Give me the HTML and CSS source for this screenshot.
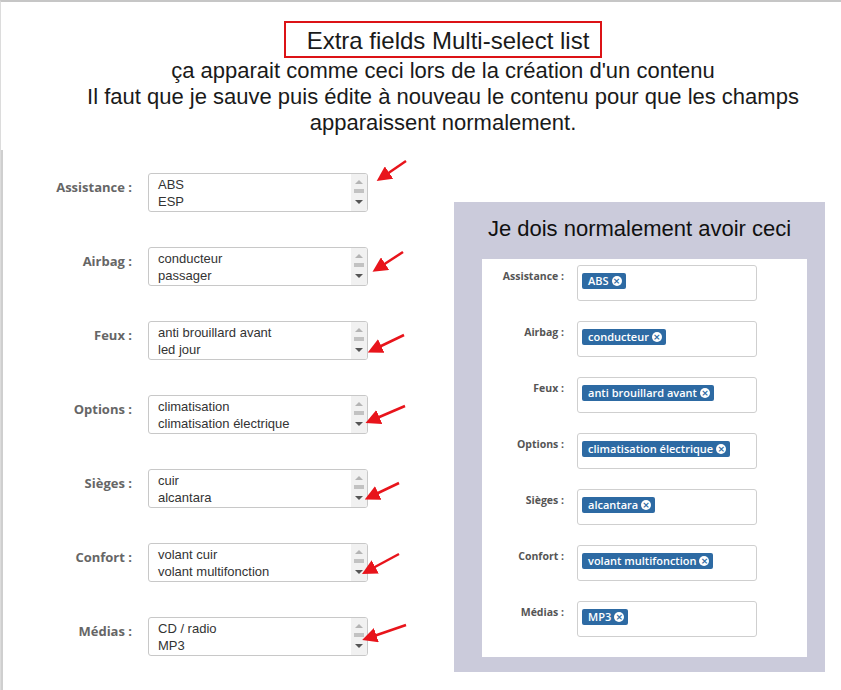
FILE: index.html
```html
<!DOCTYPE html>
<html lang="fr">
<head>
    <meta charset="UTF-8">
    <title>Extra fields Multi-select list</title>
    <link rel="stylesheet" href="styles.css">
</head>
<body>
    <div class="header">
        <div class="title-box">Extra fields Multi-select list</div>
        <p class="note">ça apparait comme ceci lors de la création d'un contenu</p>
        <p class="note">Il faut que je sauve puis édite à nouveau le contenu pour que les champs<br>apparaissent normalement.</p>
    </div>

    <div class="main">
        <div class="form">
            <label class="field-label">Assistance :</label>
            <div class="select"><div class="options"><div>ABS</div><div>ESP</div></div><div class="scroll"><span class="up"></span><span class="thumb"></span><span class="down"></span></div></div>

            <label class="field-label">Airbag :</label>
            <div class="select"><div class="options"><div>conducteur</div><div>passager</div></div><div class="scroll"><span class="up"></span><span class="thumb"></span><span class="down"></span></div></div>

            <label class="field-label">Feux :</label>
            <div class="select"><div class="options"><div>anti brouillard avant</div><div>led jour</div></div><div class="scroll"><span class="up"></span><span class="thumb"></span><span class="down"></span></div></div>

            <label class="field-label">Options :</label>
            <div class="select"><div class="options"><div>climatisation</div><div>climatisation électrique</div></div><div class="scroll"><span class="up"></span><span class="thumb"></span><span class="down"></span></div></div>

            <label class="field-label">Sièges :</label>
            <div class="select"><div class="options"><div>cuir</div><div>alcantara</div></div><div class="scroll"><span class="up"></span><span class="thumb"></span><span class="down"></span></div></div>

            <label class="field-label">Confort :</label>
            <div class="select"><div class="options"><div>volant cuir</div><div>volant multifonction</div></div><div class="scroll"><span class="up"></span><span class="thumb"></span><span class="down"></span></div></div>

            <label class="field-label">Médias :</label>
            <div class="select"><div class="options"><div>CD / radio</div><div>MP3</div></div><div class="scroll"><span class="up"></span><span class="thumb"></span><span class="down"></span></div></div>

            <!-- red annotation arrows -->
            <svg class="arrows" width="454" height="540" viewBox="0 0 454 540">
                <defs>
                    <marker id="head" markerWidth="6" markerHeight="6" refX="1" refY="3" orient="auto" markerUnits="strokeWidth">
                        <path d="M0,0 L6,3 L0,6 z" fill="#e8141b"/>
                    </marker>
                </defs>
                <g stroke="#e8141b" stroke-width="2.5" marker-end="url(#head)">
                    <line x1="405" y1="11" x2="386" y2="24"/>
                    <line x1="402" y1="102" x2="382" y2="115"/>
                    <line x1="403" y1="185" x2="378" y2="197"/>
                    <line x1="404" y1="256" x2="376" y2="268"/>
                    <line x1="398" y1="333" x2="375" y2="344"/>
                    <line x1="398" y1="404" x2="372" y2="418"/>
                    <line x1="405" y1="475" x2="373" y2="486"/>
                </g>
            </svg>
        </div>

        <div class="panel">
            <div class="panel-title">Je dois normalement avoir ceci</div>
            <div class="card">
                <label class="tag-label">Assistance :</label>
                <div class="tag-input"><span class="tag">ABS <span class="remove">&times;</span></span></div>

                <label class="tag-label">Airbag :</label>
                <div class="tag-input"><span class="tag">conducteur <span class="remove">&times;</span></span></div>

                <label class="tag-label">Feux :</label>
                <div class="tag-input"><span class="tag">anti brouillard avant <span class="remove">&times;</span></span></div>

                <label class="tag-label">Options :</label>
                <div class="tag-input"><span class="tag">climatisation électrique <span class="remove">&times;</span></span></div>

                <label class="tag-label">Sièges :</label>
                <div class="tag-input"><span class="tag">alcantara <span class="remove">&times;</span></span></div>

                <label class="tag-label">Confort :</label>
                <div class="tag-input"><span class="tag">volant multifonction <span class="remove">&times;</span></span></div>

                <label class="tag-label">Médias :</label>
                <div class="tag-input"><span class="tag">MP3 <span class="remove">&times;</span></span></div>
            </div>
        </div>
    </div>
</body>
</html>
```

FILE: styles.css
```css
body {
    margin: 0;
    height: 688px;
    overflow: hidden;
    background-color: #fff;
    border-top: 2px solid #c6c6c6;
    border-left: 1px solid #dcdcdc;
    font-family: "Liberation Sans", Arial, sans-serif;
    color: #1a1a1a;
}
.header {
    padding: 19px 0 0 44px;
    text-align: center;
}
.title-box {
    display: inline-block;
    box-sizing: border-box;
    height: 37px;
    padding: 0 11px 0 21px;
    border: 2px solid #dc1316;
    font-size: 24px;
    line-height: 35px;
}
.note {
    margin: 0;
    font-size: 22px;
    line-height: 26px;
}
.main {
    display: flex;
    align-items: flex-start;
    margin-top: 14px;
}
.form {
    position: relative;
    box-sizing: border-box;
    width: 453px;
    height: 540px;
    padding-top: 23px;
    border-left: 2px solid #cfcfcf;
    display: grid;
    grid-template-columns: 129px 220px;
    grid-auto-rows: 39px;
    column-gap: 16px;
    row-gap: 35px;
    align-content: start;
}
.field-label {
    padding-top: 5px;
    text-align: right;
    font-family: "Open Sans", sans-serif;
    font-weight: bold;
    font-size: 13px;
    color: #666;
}
.select {
    display: flex;
    box-sizing: border-box;
    border: 1px solid #c8c8c8;
    border-radius: 3px;
    overflow: hidden;
}
.options {
    flex: 1;
    padding: 3px 0 0 9px;
    font-size: 13px;
    line-height: 16.5px;
    color: #333;
}
.scroll {
    width: 16px;
    background-color: #f1f1f1;
    display: flex;
    flex-direction: column;
    align-items: center;
    padding-top: 6px;
}
.scroll .up {
    width: 0;
    height: 0;
    border-left: 4px solid transparent;
    border-right: 4px solid transparent;
    border-bottom: 4px solid #b4b4b4;
}
.scroll .thumb {
    width: 10px;
    height: 4px;
    margin-top: 5px;
    background-color: #c2c2c2;
}
.scroll .down {
    width: 0;
    height: 0;
    margin-top: 7px;
    border-left: 4px solid transparent;
    border-right: 4px solid transparent;
    border-top: 4px solid #555;
}
.arrows {
    position: absolute;
    left: -2px;
    top: 0;
}
.panel {
    box-sizing: border-box;
    width: 371px;
    margin-top: 52px;
    padding: 0 18px 15px 28px;
    background-color: #cbcbdb;
}
.panel-title {
    height: 57px;
    margin-left: -10px;
    text-align: center;
    font-size: 22px;
    line-height: 53px;
    color: #111;
}
.card {
    background-color: #fff;
    padding: 6px 0 20px;
    display: grid;
    grid-template-columns: 82px 180px;
    grid-auto-rows: 36px;
    column-gap: 13px;
    row-gap: 20px;
}
.tag-label {
    padding-top: 4px;
    text-align: right;
    font-family: "Open Sans", sans-serif;
    font-weight: bold;
    font-size: 10.5px;
    color: #555;
}
.tag-input {
    box-sizing: border-box;
    border: 1px solid #cfcfcf;
    border-radius: 3px;
    padding: 5px 0 0 4px;
}
.tag {
    display: inline-flex;
    align-items: center;
    height: 16px;
    padding: 0 4px 0 6px;
    border-radius: 2px;
    background-color: #2d6aa3;
    color: #fff;
    font-family: "Open Sans", sans-serif;
    font-weight: 600;
    font-size: 11px;
    white-space: nowrap;
}
.remove {
    display: inline-flex;
    align-items: center;
    justify-content: center;
    width: 10px;
    height: 10px;
    margin-left: 3px;
    border-radius: 50%;
    background-color: #fff;
    color: #2d6aa3;
    font-family: "DejaVu Sans", sans-serif;
    font-weight: bold;
    font-size: 9px;
    line-height: 10px;
}
```
